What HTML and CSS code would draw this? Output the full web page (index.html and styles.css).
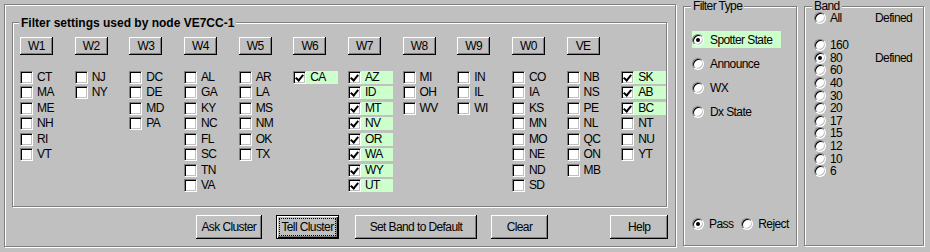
FILE: index.html
```html
<!DOCTYPE html>
<html lang="en">
<head>
  <meta charset="UTF-8">
  <title>Filter settings</title>
  <link rel="stylesheet" href="styles.css">
</head>
<body>
  <div class="dialog">
    <div class="group main">
      <div class="group nodes">
        <span class="caption title">Filter settings used by node VE7CC-1</span>
        <div class="columns">
          <div class="col">
            <button class="btn call">W1</button>
            <ul class="states">
              <li class="state"><span class="check"></span>CT</li>
              <li class="state"><span class="check"></span>MA</li>
              <li class="state"><span class="check"></span>ME</li>
              <li class="state"><span class="check"></span>NH</li>
              <li class="state"><span class="check"></span>RI</li>
              <li class="state"><span class="check"></span>VT</li>
            </ul>
          </div>
          <div class="col">
            <button class="btn call">W2</button>
            <ul class="states">
              <li class="state"><span class="check"></span>NJ</li>
              <li class="state"><span class="check"></span>NY</li>
            </ul>
          </div>
          <div class="col">
            <button class="btn call">W3</button>
            <ul class="states">
              <li class="state"><span class="check"></span>DC</li>
              <li class="state"><span class="check"></span>DE</li>
              <li class="state"><span class="check"></span>MD</li>
              <li class="state"><span class="check"></span>PA</li>
            </ul>
          </div>
          <div class="col">
            <button class="btn call">W4</button>
            <ul class="states">
              <li class="state"><span class="check"></span>AL</li>
              <li class="state"><span class="check"></span>GA</li>
              <li class="state"><span class="check"></span>KY</li>
              <li class="state"><span class="check"></span>NC</li>
              <li class="state"><span class="check"></span>FL</li>
              <li class="state"><span class="check"></span>SC</li>
              <li class="state"><span class="check"></span>TN</li>
              <li class="state"><span class="check"></span>VA</li>
            </ul>
          </div>
          <div class="col">
            <button class="btn call">W5</button>
            <ul class="states">
              <li class="state"><span class="check"></span>AR</li>
              <li class="state"><span class="check"></span>LA</li>
              <li class="state"><span class="check"></span>MS</li>
              <li class="state"><span class="check"></span>NM</li>
              <li class="state"><span class="check"></span>OK</li>
              <li class="state"><span class="check"></span>TX</li>
            </ul>
          </div>
          <div class="col">
            <button class="btn call">W6</button>
            <ul class="states">
              <li class="state on"><span class="check"></span>CA</li>
            </ul>
          </div>
          <div class="col">
            <button class="btn call">W7</button>
            <ul class="states">
              <li class="state on"><span class="check"></span>AZ</li>
              <li class="state on"><span class="check"></span>ID</li>
              <li class="state on"><span class="check"></span>MT</li>
              <li class="state on"><span class="check"></span>NV</li>
              <li class="state on"><span class="check"></span>OR</li>
              <li class="state on"><span class="check"></span>WA</li>
              <li class="state on"><span class="check"></span>WY</li>
              <li class="state on"><span class="check"></span>UT</li>
            </ul>
          </div>
          <div class="col">
            <button class="btn call">W8</button>
            <ul class="states">
              <li class="state"><span class="check"></span>MI</li>
              <li class="state"><span class="check"></span>OH</li>
              <li class="state"><span class="check"></span>WV</li>
            </ul>
          </div>
          <div class="col">
            <button class="btn call">W9</button>
            <ul class="states">
              <li class="state"><span class="check"></span>IN</li>
              <li class="state"><span class="check"></span>IL</li>
              <li class="state"><span class="check"></span>WI</li>
            </ul>
          </div>
          <div class="col">
            <button class="btn call">W0</button>
            <ul class="states">
              <li class="state"><span class="check"></span>CO</li>
              <li class="state"><span class="check"></span>IA</li>
              <li class="state"><span class="check"></span>KS</li>
              <li class="state"><span class="check"></span>MN</li>
              <li class="state"><span class="check"></span>MO</li>
              <li class="state"><span class="check"></span>NE</li>
              <li class="state"><span class="check"></span>ND</li>
              <li class="state"><span class="check"></span>SD</li>
            </ul>
          </div>
          <div class="col">
            <button class="btn call">VE</button>
            <ul class="states">
              <li class="state"><span class="check"></span>NB</li>
              <li class="state"><span class="check"></span>NS</li>
              <li class="state"><span class="check"></span>PE</li>
              <li class="state"><span class="check"></span>NL</li>
              <li class="state"><span class="check"></span>QC</li>
              <li class="state"><span class="check"></span>ON</li>
              <li class="state"><span class="check"></span>MB</li>
            </ul>
          </div>
          <div class="col">
            <div class="call-spacer"></div>
            <ul class="states">
              <li class="state on"><span class="check"></span>SK</li>
              <li class="state on"><span class="check"></span>AB</li>
              <li class="state on"><span class="check"></span>BC</li>
              <li class="state"><span class="check"></span>NT</li>
              <li class="state"><span class="check"></span>NU</li>
              <li class="state"><span class="check"></span>YT</li>
            </ul>
          </div>
        </div>
      </div>

      <div class="actions">
        <button class="btn action ask">Ask Cluster</button>
        <button class="btn action tell default"><span class="focus">Tell Cluster</span></button>
        <button class="btn action reset">Set Band to Default</button>
        <button class="btn action clear">Clear</button>
        <button class="btn action help">Help</button>
      </div>
    </div>

    <div class="group ftype">
      <span class="caption">Filter Type</span>
      <div class="opt on"><span class="radio sel"></span>Spotter State</div>
      <div class="opt"><span class="radio"></span>Announce</div>
      <div class="opt"><span class="radio"></span>WX</div>
      <div class="opt"><span class="radio"></span>Dx State</div>
      <div class="passrow">
        <span class="radio sel"></span><span class="pass-label">Pass</span>
        <span class="radio"></span><span>Reject</span>
      </div>
    </div>

    <div class="group band">
      <span class="caption">Band</span>
      <div class="band-row"><span class="radio"></span><span class="freq">All</span>Defined</div>
      <div class="band-list">
        <div class="band-row"><span class="radio"></span><span class="freq">160</span></div>
        <div class="band-row"><span class="radio sel"></span><span class="freq">80</span>Defined</div>
        <div class="band-row"><span class="radio"></span><span class="freq">60</span></div>
        <div class="band-row"><span class="radio"></span><span class="freq">40</span></div>
        <div class="band-row"><span class="radio"></span><span class="freq">30</span></div>
        <div class="band-row"><span class="radio"></span><span class="freq">20</span></div>
        <div class="band-row"><span class="radio"></span><span class="freq">17</span></div>
        <div class="band-row"><span class="radio"></span><span class="freq">15</span></div>
        <div class="band-row"><span class="radio"></span><span class="freq">12</span></div>
        <div class="band-row"><span class="radio"></span><span class="freq">10</span></div>
        <div class="band-row"><span class="radio"></span><span class="freq">6</span></div>
      </div>
    </div>
  </div>
</body>
</html>
```

FILE: styles.css
```css
:root {
  --face: #C0C0C0;
  --shadow: #808080;
  --light: #FFFFFF;
  --dark: #000000;
  --picked: #CCFFCC;
}

* {
  margin: 0;
  padding: 0;
  box-sizing: border-box;
}

body {
  background: var(--face);
  color: var(--dark);
  font-family: "Liberation Sans", Arial, sans-serif;
  font-size: 12px;
  letter-spacing: -0.6px;
  white-space: nowrap;
  width: 930px;
  height: 252px;
  overflow: hidden;
}

.dialog {
  display: flex;
  align-items: flex-start;
  padding: 4px 0 0 4px;
}

/* etched group frame */
.group {
  position: relative;
  border: 1px solid var(--shadow);
  box-shadow: inset 1px 1px 0 var(--light), 1px 1px 0 var(--light);
}

.caption {
  position: absolute;
  top: -7px;
  left: 7px;
  padding: 0 2px;
  background: var(--face);
  line-height: 12px;
}

.title {
  font-weight: bold;
  letter-spacing: 0;
  line-height: 14px;
  top: -7px;
  left: 6px;
}

.main {
  width: 672px;
  height: 243px;
  padding: 17px 7px 0;
}

.nodes {
  width: 655px;
  height: 185px;
  padding: 14px 0 0 7px;
}

.columns {
  display: grid;
  grid-template-columns: repeat(12, 54.667px);
}

.col {
  display: flex;
  flex-direction: column;
  align-items: flex-start;
}

/* classic push button */
.btn {
  background: var(--face);
  border: none;
  font: inherit;
  letter-spacing: inherit;
  color: var(--dark);
  box-shadow: inset -1px -1px 0 var(--dark), inset 1px 1px 0 var(--light),
              inset -2px -2px 0 var(--shadow);
  display: flex;
  align-items: center;
  justify-content: center;
  white-space: nowrap;
}

.call {
  width: 33px;
  height: 18px;
  margin-bottom: 16px;
}

.call-spacer {
  height: 18px;
  margin-bottom: 16px;
}

.states {
  list-style: none;
}

.state {
  display: flex;
  align-items: center;
  gap: 4px;
  width: 45px;
  height: 13px;
  line-height: 13px;
  margin-bottom: 2.43px;
}

.state.on {
  background: var(--picked);
}

.check {
  position: relative;
  width: 13px;
  height: 13px;
  background: var(--light);
  border: 1px solid;
  border-color: var(--shadow) var(--light) var(--light) var(--shadow);
  box-shadow: inset 1px 1px 0 var(--dark), inset -1px -1px 0 var(--face);
  flex: none;
}

.state.on .check::after {
  content: "";
  position: absolute;
  left: 3px;
  top: 1px;
  width: 3px;
  height: 6px;
  border-right: 2px solid var(--dark);
  border-bottom: 2px solid var(--dark);
  transform: rotate(40deg);
}

.actions {
  display: flex;
  margin-top: 8px;
  padding-left: 184px;
}

.action {
  height: 24px;
}

.ask { width: 66px; }
.tell { width: 64px; margin-left: 14px; }
.reset { width: 122px; margin-left: 16px; }
.clear { width: 58px; margin-left: 14px; }
.help { width: 58px; margin-left: 62px; }

.default {
  border: 1px solid var(--dark);
  box-shadow: inset 1px 1px 0 var(--light), inset -1px -1px 0 var(--dark),
              inset -2px -2px 0 var(--shadow);
}

.focus {
  border: 1px dotted var(--dark);
  padding: 1px 1px;
  line-height: 14px;
}

/* radio buttons */
.radio {
  position: relative;
  width: 12px;
  height: 12px;
  border-radius: 50%;
  background: var(--light);
  border: 1px solid;
  border-color: var(--shadow) var(--light) var(--light) var(--shadow);
  box-shadow: inset 1px 1px 0 var(--dark), inset -1px -1px 0 var(--face);
  flex: none;
}

.radio.sel::after {
  content: "";
  position: absolute;
  left: 3px;
  top: 3px;
  width: 4px;
  height: 4px;
  border-radius: 50%;
  background: var(--dark);
}

.ftype {
  width: 114px;
  height: 240px;
  margin: 2px 0 0 7px;
  padding: 24px 0 0 8px;
  display: flex;
  flex-direction: column;
}

.opt {
  display: flex;
  align-items: center;
  gap: 6px;
  width: 89px;
  height: 17px;
  margin-bottom: 7px;
}

.opt.on {
  background: var(--picked);
}

.passrow {
  display: flex;
  align-items: center;
  height: 17px;
  margin-top: auto;
  margin-bottom: 13px;
  gap: 5px;
}

.pass-label {
  margin-right: 3px;
}

.band {
  width: 120px;
  height: 240px;
  margin: 2px 0 0 7px;
  padding: 5px 0 0 9px;
}

.band-row {
  display: flex;
  align-items: center;
  height: 12.6px;
  line-height: 12px;
}

.band .radio {
  margin-right: 4px;
}

.freq {
  width: 45px;
}

.band-list {
  margin-top: 14.4px;
}
```
